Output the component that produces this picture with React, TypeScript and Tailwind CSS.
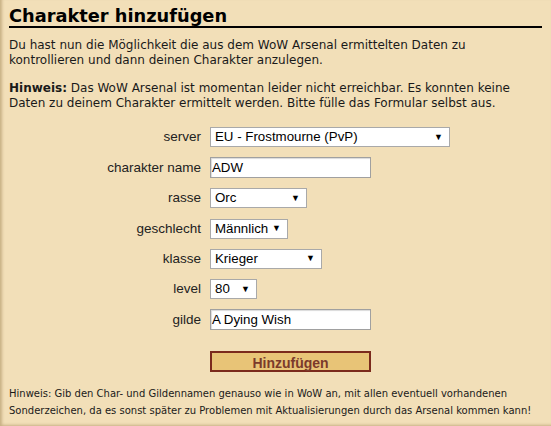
import React from "react";

const verdana = { fontFamily: '"DejaVu Sans", Verdana, sans-serif' };
const arial = { fontFamily: '"Liberation Sans", Arial, sans-serif' };

const FakeSelect = ({ value, width }: { value: string; width: string }) => (
  <div
    className={`flex h-[20px] items-center justify-between border border-[#a9a9a9] bg-white pl-[4px] pr-[6px] text-[13.3px] text-black ${width}`}
  >
    <span>{value}</span>
    <span className="text-[9px] leading-none">▼</span>
  </div>
);

const TextInput = ({ value }: { value: string }) => (
  <div className="flex h-[21px] w-[161px] items-center border border-[#a0a0a0] bg-white pl-[1px] text-[13.3px] text-black shadow-[inset_1px_1px_1px_rgba(0,0,0,0.15)]">
    {value}
  </div>
);

const Row = ({ label, children }: { label: string; children: React.ReactNode }) => (
  <div className="flex items-center">
    <div className="w-[210px] shrink-0 pr-[9px] text-right text-[13.5px] text-[#222]">{label}</div>
    {children}
  </div>
);

export default function App() {
  return (
    <div className="h-[426px] w-[551px] overflow-hidden bg-[#f2dfb8] shadow-[inset_4px_0_3px_-2px_#c8b185,inset_0_-3px_3px_-2px_#c8b185]">
      <div className="px-[9px] pt-[5px]" style={verdana}>
        <h1 className="border-b-2 border-black text-[17.8px] font-bold leading-[21px] text-black">
          Charakter hinzufügen
        </h1>
        <p className="mt-[10px] text-[12px] leading-[15px] text-[#1a1a1a]">
          Du hast nun die Möglichkeit die aus dem WoW Arsenal ermittelten Daten zu kontrollieren und dann deinen Charakter anzulegen.
        </p>
        <p className="mt-[13px] text-[12px] leading-[15px] text-[#1a1a1a]">
          <b>Hinweis:</b> Das WoW Arsenal ist momentan leider nicht erreichbar. Es konnten keine Daten zu deinem Charakter ermittelt werden. Bitte fülle das Formular selbst aus.
        </p>
      </div>

      <div className="mt-[16px] flex flex-col gap-[10px]" style={arial}>
        <Row label="server">
          <FakeSelect value="EU - Frostmourne (PvP)" width="w-[240px]" />
        </Row>
        <Row label="charakter name">
          <TextInput value="ADW" />
        </Row>
        <Row label="rasse">
          <FakeSelect value="Orc" width="w-[97px]" />
        </Row>
        <Row label="geschlecht">
          <FakeSelect value="Männlich" width="w-[78px]" />
        </Row>
        <Row label="klasse">
          <FakeSelect value="Krieger" width="w-[112px]" />
        </Row>
        <Row label="level">
          <FakeSelect value="80" width="w-[47px]" />
        </Row>
        <Row label="gilde">
          <TextInput value="A Dying Wish" />
        </Row>
        <div className="mt-[11px] pl-[210px]">
          <button className="h-[21px] w-[161px] border-2 border-[#7b2a1c] bg-[#e8c477] text-[14px] font-bold text-[#7b3a2b]">
            Hinzufügen
          </button>
        </div>
      </div>

      <p
        className="mt-[10px] px-[9px] text-[10px] leading-[17px] text-[#1a1a1a]"
        style={verdana}
      >
        Hinweis: Gib den Char- und Gildennamen genauso wie in WoW an, mit allen eventuell vorhandenen Sonderzeichen, da es sonst später zu Problemen mit Aktualisierungen durch das Arsenal kommen kann!
      </p>
    </div>
  );
}
